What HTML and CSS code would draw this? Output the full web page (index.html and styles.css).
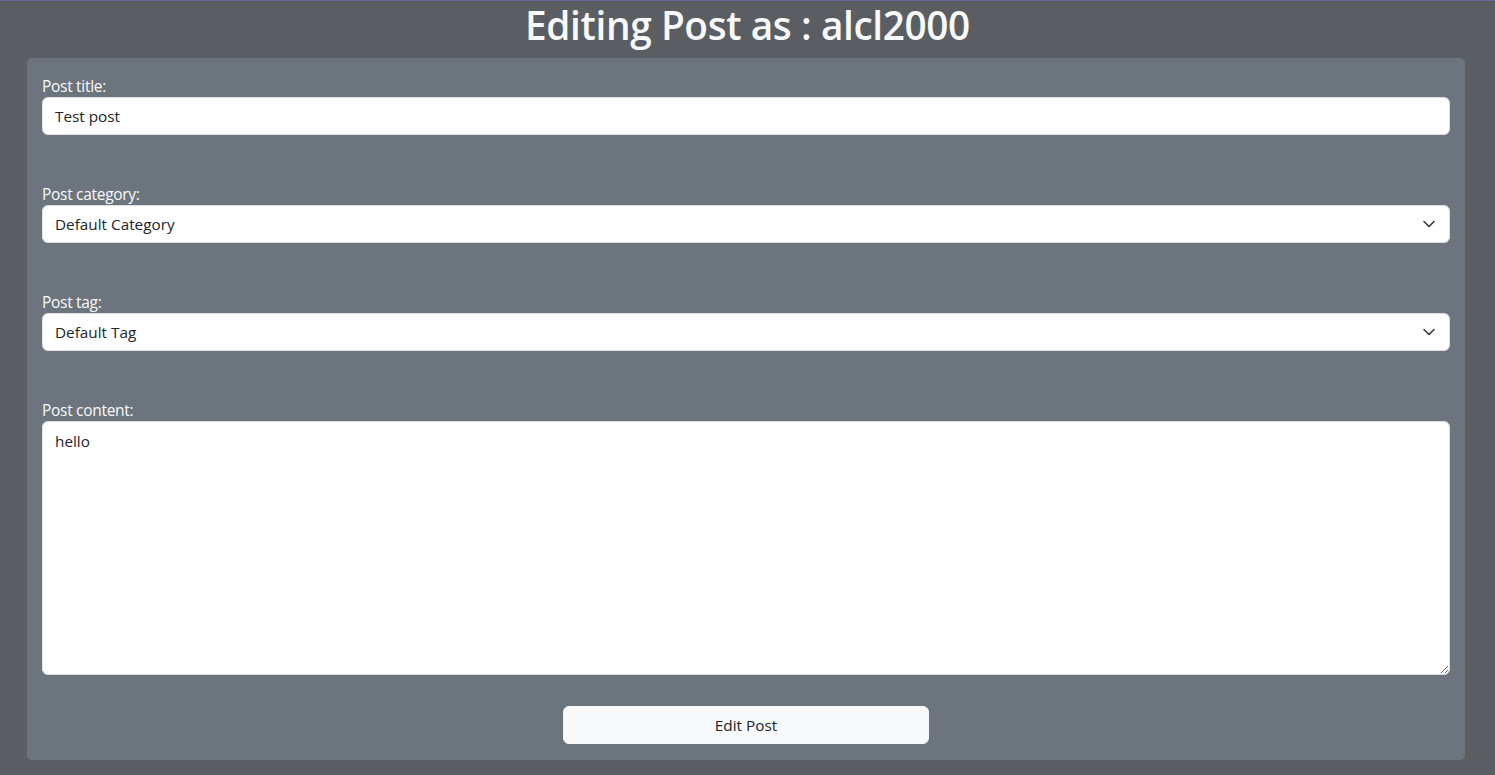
FILE: index.html
```html
<!DOCTYPE html>
<html lang="en">
<head>
<meta charset="utf-8">
<title>Editing Post</title>
<link rel="stylesheet" href="styles.css">
</head>
<body>
<h1 class="page-title">Editing Post as : alcl2000</h1>
<form class="card">
  <div class="group">
    <label class="label" for="title">Post title:</label>
    <input class="control" id="title" type="text" value="Test post">
  </div>
  <div class="group">
    <label class="label" for="cat">Post category:</label>
    <div class="select-wrap">
      <select class="control select" id="cat"><option>Default Category</option></select>
      <svg class="chev" width="12" height="8" viewBox="0 0 12 8"><path d="M1 1.5l5 5 5-5" fill="none" stroke="#343a40" stroke-width="1.6" stroke-linecap="round" stroke-linejoin="round"/></svg>
    </div>
  </div>
  <div class="group">
    <label class="label" for="tag">Post tag:</label>
    <div class="select-wrap">
      <select class="control select" id="tag"><option>Default Tag</option></select>
      <svg class="chev" width="12" height="8" viewBox="0 0 12 8"><path d="M1 1.5l5 5 5-5" fill="none" stroke="#343a40" stroke-width="1.6" stroke-linecap="round" stroke-linejoin="round"/></svg>
    </div>
  </div>
  <div class="group last">
    <label class="label" for="content">Post content:</label>
    <textarea class="control area" id="content">hello</textarea>
  </div>
  <div class="actions">
    <button class="btn" type="button">Edit Post</button>
  </div>
</form>
</body>
</html>
```
FILE: styles.css
```css
html, body {
  margin: 0;
  padding: 0;
}
body {
  background: #5a5e63;
  border-top: 1px solid #6a6a9c;
  font-family: "Open Sans", "Noto Sans", sans-serif;
  color: #212529;
  height: 774px;
  overflow: hidden;
}
.page-title {
  margin: 0 0 8px;
  text-align: center;
  color: #f8f9fa;
  font-size: 38.8px;
  font-weight: 600;
  line-height: 49px;
  letter-spacing: -0.4px;
}
.card {
  margin: 0 30px 0 27px;
  background: #6c757d;
  border-radius: 5px;
  padding: 15px 15px 16px 15px;
  display: flex;
  flex-direction: column;
}
.group {
  display: flex;
  flex-direction: column;
  margin-bottom: 46px;
}
.group.last {
  margin-bottom: 31px;
}
.label {
  color: #f8f9fa;
  font-size: 15.5px;
  line-height: 24px;
  letter-spacing: -0.3px;
  padding-top: 1px;
  margin-bottom: -1px;
}
.control {
  box-sizing: border-box;
  width: 100%;
  height: 38px;
  margin: 0;
  border: 1px solid #dee2e6;
  border-radius: 6px;
  background: #fff;
  padding: 6px 12px;
  font-family: inherit;
  font-size: 15.3px;
  color: #212529;
  outline: none;
}
.select-wrap {
  position: relative;
}
.select {
  appearance: none;
  -webkit-appearance: none;
  padding-right: 36px;
}
.chev {
  position: absolute;
  right: 15px;
  top: 15px;
  pointer-events: none;
}
.area {
  height: 254px;
  resize: vertical;
  padding-top: 8px;
  line-height: 22px;
}
.actions {
  display: flex;
  justify-content: center;
}
.btn {
  width: 366px;
  height: 38px;
  border: 1px solid #f8f9fa;
  border-radius: 6px;
  background: #f8f9fa;
  color: #212529;
  font-family: inherit;
  font-size: 15.3px;
  padding: 0;
}
```
